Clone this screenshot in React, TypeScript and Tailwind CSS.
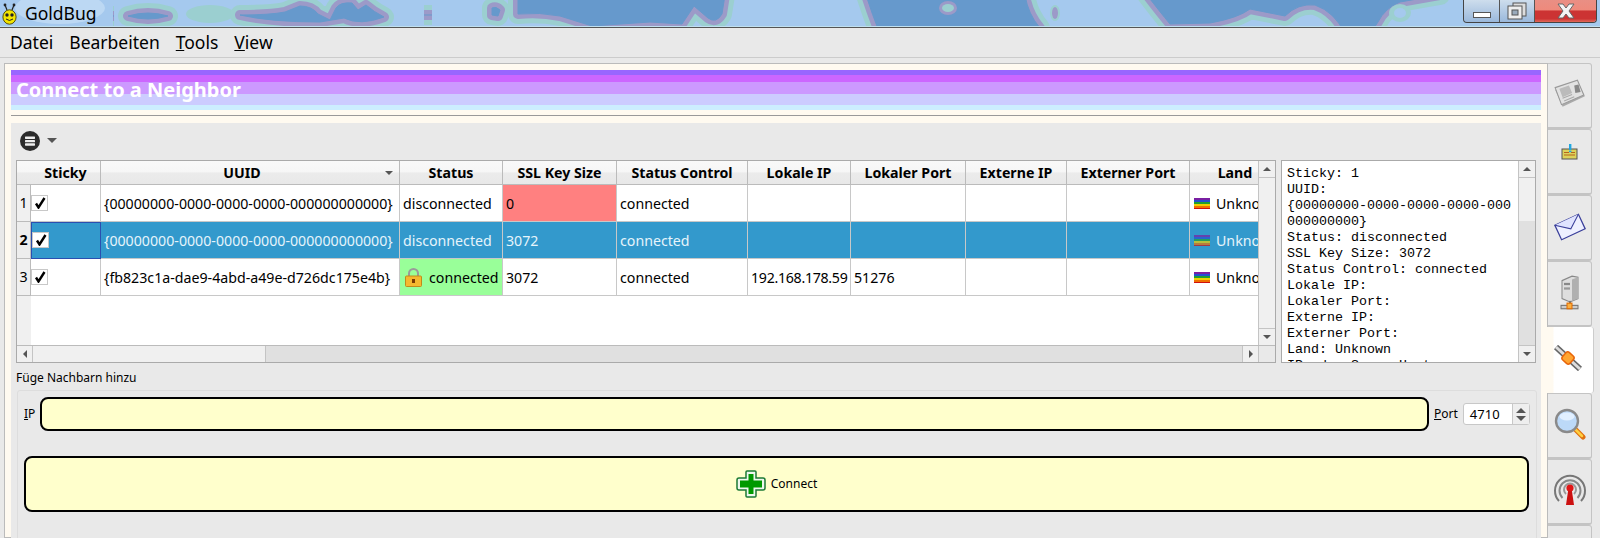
import React from 'react';

const tableGrid = 'grid grid-cols-[14px_70px_299px_103px_114px_131px_103px_115px_101px_123px_68px]';

const headers = ['Sticky', 'UUID', 'Status', 'SSL Key Size', 'Status Control', 'Lokale IP', 'Lokaler Port', 'Externe IP', 'Externer Port', 'Land'];

const rows = [
  { n: 1, uuid: '{00000000-0000-0000-0000-000000000000}', status: 'disconnected', ssl: '0', ip: '', port: '' },
  { n: 2, uuid: '{00000000-0000-0000-0000-000000000000}', status: 'disconnected', ssl: '3072', ip: '', port: '' },
  { n: 3, uuid: '{fb823c1a-dae9-4abd-a49e-d726dc175e4b}', status: 'connected', ssl: '3072', ip: '192.168.178.59', port: '51276' },
];

const details = [
  'Sticky: 1',
  'UUID:',
  '{00000000-0000-0000-0000-000',
  '000000000}',
  'Status: disconnected',
  'SSL Key Size: 3072',
  'Status Control: connected',
  'Lokale IP:',
  'Lokaler Port:',
  'Externe IP:',
  'Externer Port:',
  'Land: Unknown',
  'IP oder Scope-Hostname:',
];

// wallpaper behind the title bar: blue pools with a purple and a teal rim
const pools = [
  'M128 16 Q148 10 168 16 Q148 22 128 16 Z',
  'M113 16 L114 16',
  'M240 15 Q270 15 285 12 L300 6 Q312 6 318 14 L330 20 L336 8 Q340 2 352 3 L358 10 L366 5 Q374 12 384 17 Q360 26 344 18 L320 22 Q270 22 240 15 Z',
  'M424 15 L432 15',
  'M492 8 Q496 6 500 10 L498 16 L492 15 Z',
  'M518 -5 L725 -5 L722 14 Q716 24 708 18 L694 6 L682 24 L650 22 L592 26 L560 16 Q540 12 518 14 Z',
  'M866 -5 L1025 -5 Q1028 14 1040 28 L1040 34 L880 34 Q872 14 866 -5 Z',
  'M1147 -5 L1440 -5 L1400 2 Q1385 8 1378 22 L1370 34 L1345 34 Q1335 12 1315 5 Q1298 3 1285 16 L1250 9 Q1238 18 1210 23 L1170 24 Q1160 12 1147 -5 Z',
];

const Titlebar = () => (
  <div className="relative h-[28px] shrink-0 bg-[#a5c9ee] border-b border-b-[#555] overflow-hidden">
    <svg className="absolute inset-0" width="1600" height="27" viewBox="0 0 1600 27">
      <ellipse cx="60" cy="8" rx="45" ry="16" fill="#bcd8f3" />
      <ellipse cx="210" cy="14" rx="24" ry="9" fill="#9bcfd0" />
      {pools.map((d) => <path key={`t${d}`} d={d} fill="#9bcfd0" stroke="#9bcfd0" strokeWidth="20" strokeLinejoin="round" />)}
      {pools.map((d) => <path key={`p${d}`} d={d} fill="#9c9ac8" stroke="#9c9ac8" strokeWidth="10" strokeLinejoin="round" />)}
      {pools.map((d) => <path key={`b${d}`} d={d} fill="#6699cc" stroke="#6699cc" strokeWidth="1" />)}
      <ellipse cx="948" cy="8" rx="9" ry="7" fill="#9c9ac8" />
      <ellipse cx="948" cy="8" rx="6" ry="4" fill="#9bcfd0" />
      <ellipse cx="1055" cy="13" rx="5" ry="8" fill="#9bcfd0" />
      <ellipse cx="1055" cy="13" rx="3" ry="6" fill="#9c9ac8" />
      <ellipse cx="1400" cy="13" rx="11" ry="9" fill="#9bcfd0" />
      <ellipse cx="1400" cy="13" rx="6" ry="5" fill="#a5c9ee" />
      <rect y="26" width="1600" height="1" fill="#c0e0f0" />
    </svg>
    <div className="relative flex items-center h-full">
      <svg className="ml-[2px]" width="15" height="22" viewBox="0 0 15 22">
        <path d="M5 7 L3 2 M10 7 L12 2" stroke="#222" strokeWidth="1.2" fill="none" />
        <circle cx="3" cy="2" r="1.4" fill="#222" />
        <circle cx="12" cy="2" r="1.4" fill="#222" />
        <ellipse cx="7.5" cy="14" rx="6.6" ry="7.2" fill="#f1e400" stroke="#55500a" />
        <circle cx="5" cy="12" r="1.7" fill="#222" />
        <circle cx="10" cy="12" r="1.7" fill="#222" />
        <path d="M4 16 Q7.5 19 11 16" stroke="#222" fill="none" />
      </svg>
      <span className="ml-[8px] text-[17.5px] text-black [font-family:'Noto_Sans',sans-serif]">GoldBug</span>
    </div>
    <WindowButtons />
  </div>
);

const WindowButtons = () => (
  <div className="absolute right-[3px] top-0 h-[23px] w-[134px] flex border border-t-0 border-[#444] rounded-b-[4px] overflow-hidden">
    <div className="w-[36px] flex items-end justify-center pb-[4px] border-r border-[#555] bg-gradient-to-b from-[#dfe6ec]/70 to-[#8aa0c0]/40">
      <div className="w-[18px] h-[6px] bg-white border border-[#555]" />
    </div>
    <div className="w-[35px] flex items-center justify-center border-r border-[#555] bg-gradient-to-b from-[#dfe6ec]/70 to-[#8aa0c0]/40">
      <svg width="20" height="18" viewBox="0 0 20 18">
        <rect x="6" y="1" width="13" height="13" fill="#ddd" stroke="#555" />
        <rect x="1" y="4" width="14" height="13" fill="#eee" stroke="#555" />
        <rect x="5" y="8" width="6" height="5" fill="#9ab" stroke="#555" />
      </svg>
    </div>
    <div className="flex-1 flex items-center justify-center bg-[linear-gradient(#e98f84_0,#ee8a7c_45%,#cc3333_50%,#cc3333_85%,#e06a5a_100%)]">
      <svg width="22" height="18" viewBox="0 0 22 18">
        <path d="M3 2 L8 2 L11 6 L14 2 L19 2 L14 9 L19 16 L14 16 L11 12 L8 16 L3 16 L8 9 Z" fill="#f4f4f4" stroke="#666" />
      </svg>
    </div>
  </div>
);

const Menubar = () => (
  <div className="h-[30px] shrink-0 bg-[#e9e9e9] border-b border-b-[#ccc] flex items-center pl-[10px] gap-[16px] text-[17.5px] text-black [font-family:'Noto_Sans',sans-serif]">
    <span>Datei</span>
    <span>Bearbeiten</span>
    <span><u>T</u>ools</span>
    <span><u>V</u>iew</span>
  </div>
);

const FlagIcon = ({ dim }: { dim?: boolean }) => (
  <svg className={dim ? 'shrink-0 opacity-70' : 'shrink-0'} width="16" height="11" viewBox="0 0 16 11">
    <rect y="0" width="16" height="2" fill="#7a1fa2" />
    <rect y="2" width="16" height="2" fill="#2450d0" />
    <rect y="4" width="16" height="2" fill="#1fa02f" />
    <rect y="6" width="16" height="2" fill="#f0d000" />
    <rect y="8" width="16" height="2" fill="#f07000" />
    <rect y="10" width="16" height="1" fill="#d01010" />
  </svg>
);

const LockIcon = () => (
  <svg className="shrink-0" width="17" height="19" viewBox="0 0 17 19">
    <path d="M4 9 V5.5 A4.5 4.5 0 0 1 13 5.5 V9" fill="none" stroke="#9a9a9a" strokeWidth="2" />
    <rect x="0.5" y="8" width="16" height="10.5" rx="1" fill="#f5b82e" stroke="#c08a1a" />
    <rect x="7" y="11" width="3" height="4" fill="#7a3a00" />
  </svg>
);

const Checkbox = () => (
  <div className="-mt-px w-[17px] h-[16px] bg-white border border-[#c8c8c8] flex items-center justify-center">
    <svg width="12" height="12" viewBox="0 0 12 12">
      <path d="M2 6.5 L4.5 10.5 L10.5 1" fill="none" stroke="#000" strokeWidth="2.4" />
    </svg>
  </div>
);

const Arrow = ({ dir, big }: { dir: 'up' | 'down' | 'left' | 'right'; big?: boolean }) => {
  const points = {
    up: '0,4 4,0 8,4',
    down: '0,0 8,0 4,4',
    left: '4,0 4,8 0,4',
    right: '0,0 0,8 4,4',
  }[dir];
  const size = dir === 'up' || dir === 'down' ? { width: 8, height: 4 } : { width: 4, height: 8 };
  return (
    <svg className={big ? 'w-[10px] h-[5px]' : ''} {...size} viewBox={`0 0 ${size.width} ${size.height}`}>
      <polygon points={points} fill="#555" />
    </svg>
  );
};

const TableRow = ({ row }: { row: (typeof rows)[number] }) => {
  const selected = row.n === 2;
  const base = 'h-[37px] pt-px border-r border-b border-[#c8c8c8] flex items-center px-[3px] whitespace-nowrap overflow-hidden';
  const fg = selected ? 'bg-[#3399cc] text-[#e6f4fb]' : 'bg-white text-black';
  const statusCell = row.status === 'connected' ? 'bg-[#99ff99] text-black' : fg;
  const sslCell = row.ssl === '0' ? 'bg-[#ff8080] text-black' : fg;
  return (
    <div className={tableGrid}>
      <div className={selected
        ? 'h-[37px] border-r border-b border-[#bbb] bg-[#ededed] flex items-center justify-center font-bold text-black'
        : 'h-[37px] border-r border-b border-[#bbb] bg-[#f0f0f0] flex items-center justify-center text-black'}>{row.n}</div>
      <div className={selected
        ? 'h-[37px] border border-[#2a4fb0] bg-[#3399cc] flex items-center'
        : 'h-[37px] border-r border-b border-[#c8c8c8] bg-white flex items-center'}><Checkbox /></div>
      <div className={`${base} ${fg}`}>{row.uuid}</div>
      <div className={`${base} ${statusCell} ${row.status === 'connected' ? 'gap-[7px] pl-[5px]' : ''}`}>
        {row.status === 'connected' && <LockIcon />}
        {row.status}
      </div>
      <div className={`${base} ${sslCell}`}>{row.ssl}</div>
      <div className={`${base} ${fg}`}>connected</div>
      <div className={`${base} ${fg} tracking-[-0.3px]`}>{row.ip}</div>
      <div className={`${base} ${fg}`}>{row.port}</div>
      <div className={`${base} ${fg}`} />
      <div className={`${base} ${fg}`} />
      <div className={`${base} ${fg} gap-[6px] pl-[4px] border-r-0`}>
        <FlagIcon dim={selected} />
        Unknown
      </div>
    </div>
  );
};

const ScrollButton = ({ dir, className }: { dir: 'up' | 'down' | 'left' | 'right'; className: string }) => (
  <div className={`shrink-0 flex items-center justify-center bg-[#f0f0f0] border-[#c4c4c4] ${className}`}>
    <Arrow dir={dir} />
  </div>
);

const headerClass = (h: string) => {
  if (h === 'UUID') return 'relative border-r border-b border-[#bbb] flex items-center justify-center whitespace-nowrap pr-[16px]';
  if (h === 'Land') return 'border-b border-[#bbb] flex items-center justify-center whitespace-nowrap pl-[22px]';
  return 'border-r border-b border-[#bbb] flex items-center justify-center whitespace-nowrap';
};

const NeighborTable = () => (
  <div className="w-[1260px] h-[203px] shrink-0 border border-[#aaa] flex flex-col bg-white text-[14.2px] [font-family:'Noto_Sans',sans-serif]">
    <div className="flex flex-1 min-h-0">
      <div className="w-[1241px] shrink-0 overflow-hidden bg-[linear-gradient(90deg,#f0f0f0_14px,white_14px)]">
        <div className={`${tableGrid} h-[24px] bg-[linear-gradient(#f9f9f9_0,#f6f6f6_45%,#ebebeb_50%,#e8e8e8_100%)] font-bold text-black`}>
          <div className="border-b border-[#bbb]" />
          {headers.map((h) => (
            <div key={h} className={headerClass(h)}>
              {h}
              {h === 'UUID' && <span className="absolute right-[6px] top-[10px] flex"><Arrow dir="down" /></span>}
            </div>
          ))}
        </div>
        {rows.map((row) => <TableRow key={row.n} row={row} />)}
      </div>
      <div className="w-[17px] flex flex-col bg-[#f0f0f0] border-l border-[#c4c4c4]">
        <ScrollButton dir="up" className="h-[17px] border-b" />
        <div className="flex-1" />
        <ScrollButton dir="down" className="h-[17px] border-t" />
      </div>
    </div>
    <div className="h-[17px] shrink-0 flex border-t border-[#bbb] bg-[#e0e0e0]">
      <ScrollButton dir="left" className="w-[16px] border-r" />
      <div className="w-[233px] bg-[#f0f0f0] border-r border-[#c4c4c4]" />
      <div className="flex-1" />
      <ScrollButton dir="right" className="w-[16px] border-l" />
      <div className="w-[17px] bg-[#e9e9e9] border-l border-[#c4c4c4]" />
    </div>
  </div>
);

const DetailPanel = () => (
  <div className="ml-[5px] w-[255px] h-[203px] shrink-0 border border-[#aaa] bg-white flex overflow-hidden">
    <div className="flex-1 pl-[5px] pt-[5px] overflow-hidden text-[13.33px] leading-[16px] text-black whitespace-pre [font-family:'Liberation_Mono',monospace]">
      {details.map((line) => <div key={line}>{line}</div>)}
    </div>
    <div className="w-[17px] shrink-0 flex flex-col bg-[#e0e0e0] border-l border-[#c4c4c4]">
      <ScrollButton dir="up" className="h-[17px] border-b" />
      <div className="h-[43px] bg-[#f0f0f0]" />
      <div className="flex-1" />
      <ScrollButton dir="down" className="h-[17px] border-t" />
    </div>
  </div>
);

const SpinBox = () => (
  <div className="ml-[5px] w-[67px] h-[22px] border border-[#c8c8c8] rounded-[3px] flex bg-white">
    <div className="flex-1 pl-[6px] text-[13px] leading-[20px] text-black">4710</div>
    <div className="w-[17px] bg-[#eee] border-l border-[#c8c8c8] flex flex-col items-center justify-center gap-[3px]">
      <Arrow dir="up" big />
      <Arrow dir="down" big />
    </div>
  </div>
);

const AddNeighbor = () => (
  <div className="[font-family:'Noto_Sans',sans-serif] text-black">
    <div className="mt-[8px] text-[12px] leading-[14px]">Füge Nachbarn hinzu</div>
    <div className="mt-[5px] ml-px w-[1520px] h-[160px] border border-[#ddd] rounded-[3px] px-[6px] pt-[6px]">
      <div className="flex items-center h-[34px] text-[12px]">
        <span className="w-[16px]"><u>I</u>P</span>
        <div className="w-[1389px] h-[34px] shrink-0 bg-[#ffffcc] border-2 border-black rounded-[8px]" />
        <span className="ml-[5px]"><u>P</u>ort</span>
        <SpinBox />
      </div>
      <div className="mt-[25px] w-[1505px] h-[56px] bg-[#ffffcc] border-2 border-black rounded-[8px] flex items-center justify-center gap-[5px] text-[12px]">
        <svg width="30" height="28" viewBox="0 0 30 28">
          <path d="M10 2 Q10 1 11 1 H19 Q20 1 20 2 V8 H27 Q29 8 29 10 V18 Q29 20 27 20 H20 V26 Q20 27 19 27 H11 Q10 27 10 26 V20 H3 Q1 20 1 18 V10 Q1 8 3 8 H10 Z" fill="#eef7ee" stroke="#1c7a34" strokeWidth="1.5" />
          <path d="M12.5 4 H17.5 V10.5 H26 V17.5 H17.5 V24 H12.5 V17.5 H4 V10.5 H12.5 Z" fill="#009900" />
        </svg>
        <span>Connect</span>
      </div>
    </div>
  </div>
);

const NewsIcon = () => (
  <svg width="34" height="30" viewBox="0 0 32 28">
    <path d="M2 10 L23 2 L30 16 L9 26 Z" fill="#aaa" />
    <path d="M2 8 L23 1 L29 15 L8 24 Z" fill="#e2e2e2" stroke="#999" />
    <path d="M6 9 L15 6 L18 13 L9 17 Z" fill="#bbb" />
    <path d="M9 18 L18 14.5 M10.5 20.5 L20 16.5" stroke="#aaa" />
    <path d="M20 6 L24 5 L26 12 L21 13 Z" fill="#888" />
  </svg>
);

const BadgeIcon = () => (
  <svg width="18" height="18" viewBox="0 0 18 18">
    <rect x="1" y="6" width="15" height="10" fill="#dcd25a" stroke="#555" />
    <path d="M3 9.5 H8 M10 9.5 H14 M3 12 H14" stroke="#b5651d" />
    <rect x="8" y="1" width="2.4" height="6" fill="#22a7e0" />
    <rect x="8" y="7.6" width="2.4" height="1.6" fill="#22a7e0" />
  </svg>
);

const MailIcon = () => (
  <svg width="32" height="28" viewBox="0 0 32 28">
    <g transform="rotate(-25 16 14)">
      <rect x="3" y="6" width="26" height="16" fill="#eef0ff" stroke="#3a3f9a" strokeWidth="1.3" />
      <path d="M3 6 L16 16 L29 6" fill="#dfe3ff" stroke="#3a3f9a" />
    </g>
  </svg>
);

const ServerIcon = () => (
  <svg width="20" height="36" viewBox="0 0 20 32" preserveAspectRatio="none">
    <path d="M2 5 L12 1 L18 2 V21 L10 24 L2 21 Z" fill="#dedede" stroke="#888" />
    <path d="M12 4 L18 2 V21 L12 23 Z" fill="#b0b0b0" />
    <rect x="4" y="7" width="6" height="2" fill="#888" />
    <rect x="4" y="11" width="6" height="2" fill="#999" />
    <rect x="9" y="23" width="2" height="4" fill="#777" />
    <rect x="1" y="27" width="17" height="3" fill="#ccc" stroke="#777" />
    <rect x="7" y="25" width="5" height="5" fill="#fbb040" stroke="#e06b00" />
  </svg>
);

const LinkIcon = () => (
  <svg width="28" height="26" viewBox="0 0 28 26">
    <path d="M2 2 L26 24" stroke="#666" strokeWidth="6" />
    <path d="M2 2 L26 24" stroke="#ddd" strokeWidth="3" />
    <rect x="9" y="8" width="10" height="10" rx="2.5" transform="rotate(42 14 13)" fill="#ffa530" stroke="#e8650a" strokeWidth="1.5" />
  </svg>
);

const SearchIcon = () => (
  <svg width="32" height="32" viewBox="0 0 32 32">
    <path d="M20 20 L29 29" stroke="#e07010" strokeWidth="5" strokeLinecap="round" />
    <path d="M20 20 L28 28" stroke="#ffcf40" strokeWidth="2.5" strokeLinecap="round" />
    <circle cx="13" cy="13" r="11" fill="#bcd9f8" stroke="#8a8a8a" strokeWidth="2.4" />
    <ellipse cx="13" cy="8.5" rx="7.5" ry="4" fill="#e2f0ff" />
  </svg>
);

const AntennaIcon = () => (
  <svg width="34" height="34" viewBox="0 0 34 34">
    <path d="M6 28 A15 15 0 1 1 28 28" fill="none" stroke="#777" strokeWidth="2" />
    <path d="M9.5 25 A10.5 10.5 0 1 1 24.5 25" fill="none" stroke="#888" strokeWidth="2" />
    <path d="M13 21 A6 6 0 1 1 21 21" fill="none" stroke="#999" strokeWidth="2" />
    <path d="M15.5 15 H18.5 L21 32 H13 Z" fill="#cc1111" />
    <circle cx="17" cy="15" r="3.6" fill="#e01515" />
  </svg>
);

const tabs = [
  { id: 'news', icon: <NewsIcon />, pad: 'pb-[4px]' },
  { id: 'badge', icon: <BadgeIcon />, pad: 'pb-[20px]' },
  { id: 'mail', icon: <MailIcon />, pad: 'pb-[2px]' },
  { id: 'server', icon: <ServerIcon />, pad: 'pb-[2px]' },
  { id: 'link', icon: <LinkIcon />, selected: true, pad: 'pb-[4px]' },
  { id: 'search', icon: <SearchIcon />, pad: 'pb-[4px]' },
  { id: 'antenna', icon: <AntennaIcon />, pad: 'pb-[4px]' },
  { id: 'more', icon: null, pad: '' },
];

const SideTabs = () => (
  <div className="w-[46px] shrink-0 flex flex-col">
    {tabs.map((tab) => (
      <div
        key={tab.id}
        className={`${tab.pad} ${tab.selected
          ? 'relative -ml-[7px] w-[53px] h-[66px] shrink-0 pl-[5px] pr-[3px] rounded-r-[3px] border-r border-[#ccc] bg-[linear-gradient(90deg,#fffaf0_7px,#fffaf0_12px,white_13px)] flex items-center justify-center'
          : 'w-[44px] h-[66px] shrink-0 border border-l-0 border-[#c4c4c4] border-b-2 rounded-r-[3px] bg-[#e9e9e9] flex items-center justify-center'}`}
      >
        {tab.icon}
      </div>
    ))}
  </div>
);

const App: React.FC = () => {
  return (
    <div className="w-[1600px] h-[538px] overflow-hidden flex flex-col bg-[#e9e9e9]">
      <Titlebar />
      <Menubar />
      <div className="flex flex-1 min-h-0 pl-[4px] pt-[5px]">
        <div className="w-[1544px] shrink-0 border border-[#bbb] bg-[#fffaf0] pt-[6px] px-[6px] flex flex-col">
          <div className="h-[40px] shrink-0 bg-[linear-gradient(#9966ff_0,#9966ff_5px,#cc66ff_5px,#cc66ff_12px,#cc99ff_12px,#cc99ff_24px,#ccccff_24px,#ccccff_35px,#cceeff_35px)] flex items-center pl-[5px] text-[20px] font-bold text-white [font-family:'Noto_Sans',sans-serif]">
            Connect to a Neighbor
          </div>
          <div className="mt-[5px] h-px shrink-0 bg-[#999]" />
          <div className="mt-[7px] flex-1 bg-[#e9e9e9] px-[5px]">
            <div className="h-[37px] flex items-center pl-[4px] pb-[2px] gap-[7px]">
              <svg width="20" height="20" viewBox="0 0 20 20">
                <circle cx="10" cy="10" r="10" fill="#2b2b2b" />
                <rect x="5" y="5.5" width="10" height="2.4" rx="0.6" fill="#eee" />
                <rect x="5" y="8.9" width="10" height="2.4" rx="0.6" fill="#eee" />
                <rect x="5" y="12.3" width="10" height="2.4" rx="0.6" fill="#eee" />
              </svg>
              <Arrow dir="down" big />
            </div>
            <div className="flex">
              <NeighborTable />
              <DetailPanel />
            </div>
            <AddNeighbor />
          </div>
        </div>
        <SideTabs />
      </div>
    </div>
  );
};

export default App;
